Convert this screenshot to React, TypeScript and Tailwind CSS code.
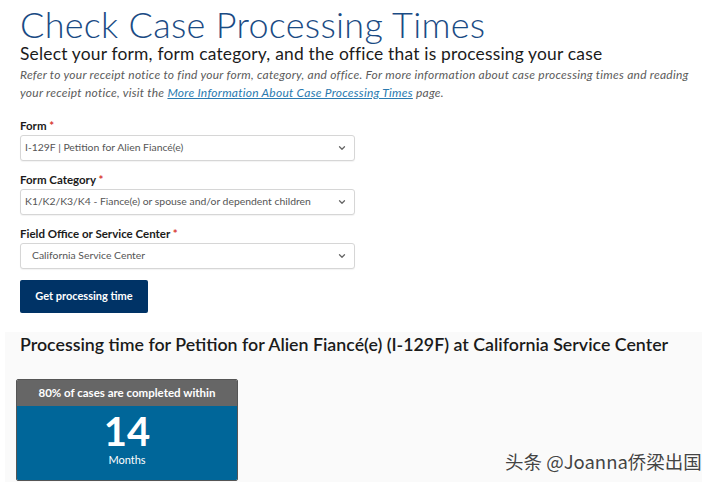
import { ChevronDown } from 'lucide-react';

const fields = [
    { label: 'Form', value: 'I-129F | Petition for Alien Fiancé(e)', pad: 'pl-[4px]' },
    { label: 'Form Category', value: 'K1/K2/K3/K4 - Fiance(e) or spouse and/or dependent children', pad: 'pl-[4px]' },
    { label: 'Field Office or Service Center', value: 'California Service Center', pad: 'pl-[11px]' },
];

function SelectBox({ value, pad }: { value: string; pad: string }) {
    return (
        <div className={`flex items-center justify-between w-[335px] h-[26px] border border-[#d6d6d6] rounded-[3px] bg-white pr-[7px] shadow-[0_1px_1px_rgba(0,0,0,0.05)] ${pad}`}>
            <span className="text-[10.4px] text-[#555]">{value}</span>
            <ChevronDown size={10} strokeWidth={3} className="text-[#666]" />
        </div>
    );
}

export default function App() {
    return (
        <div className="relative w-[720px] h-[482px] bg-white overflow-hidden font-['Lato','Open_Sans',sans-serif]">
            <div className="pl-[20px] pt-[4px]">
                <h1 className="text-[36px] leading-[40px] font-light text-[#1a4b84] tracking-[0.3px]">Check Case Processing Times</h1>
                <h2 className="text-[17.4px] leading-[20px] text-[#1b1b1b] tracking-[0.2px]">Select your form, form category, and the office that is processing your case</h2>
                <p className="text-[12px] leading-[18px] italic text-[#5b5b5b] mt-[2px] tracking-[0.25px] whitespace-nowrap">
                    Refer to your receipt notice to find your form, category, and office. For more information about case processing times and reading
                    <br />
                    your receipt notice, visit the{' '}
                    <span className="underline text-[#2a7ab0]">More Information About Case Processing Times</span> page.
                </p>

                <div className="flex flex-col gap-[12px] mt-[17px]">
                    {fields.map((f) => (
                        <div key={f.label} className="flex flex-col gap-[2px]">
                            <label className="text-[11.5px] leading-[14px] font-bold text-[#1b1b1b]">
                                {f.label} <span className="text-[#d83933]">*</span>
                            </label>
                            <SelectBox value={f.value} pad={f.pad} />
                        </div>
                    ))}
                </div>

                <button className="mt-[11px] w-[128px] h-[33px] bg-[#003366] text-white text-[11px] font-bold rounded-[2px]">
                    Get processing time
                </button>
            </div>

            {/* Result panel */}
            <div className="ml-[5px] mt-[19px] w-[697px] h-[150px] bg-[#fafafa] pt-[1px]">
                <h3 className="pl-[15px] text-[17.8px] leading-[22px] font-semibold text-[#1b1b1b]">
                    Processing time for Petition for Alien Fiancé(e) (I-129F) at California Service Center
                </h3>
                <div className="ml-[11px] mt-[24px] w-[222px] h-[102px] rounded-[2px] border border-[#555] overflow-hidden">
                    <div className="h-[26px] bg-[#666] text-white text-[11.5px] font-bold flex items-center justify-center">
                        80% of cases are completed within
                    </div>
                    <div className="h-[76px] bg-[#006699] text-white flex flex-col items-center pt-[2px]">
                        <span className="text-[40px] leading-[46px] font-bold">14</span>
                        <span className="text-[11px] leading-[12px]">Months</span>
                    </div>
                </div>
            </div>

            {/* watermark */}
            <div className="absolute left-[505px] top-[448px] text-[18.5px] text-[#444] font-['Noto_Sans_CJK_SC',sans-serif] [text-shadow:0_0_2px_#fff,0_0_2px_#fff]">
                头条 @Joanna侨梁出国
            </div>
        </div>
    );
}
